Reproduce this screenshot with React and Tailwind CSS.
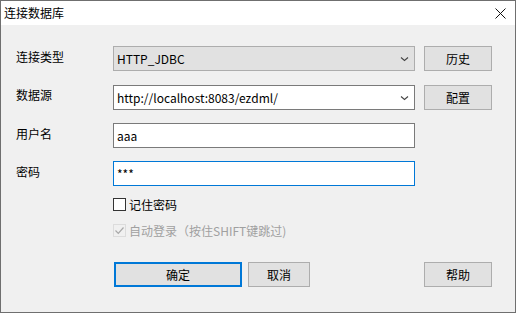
import React from "react";

const font = { fontFamily: '"Noto Sans CJK SC", "Noto Sans", sans-serif' };

function Chevron() {
  return (
    <svg width="9" height="6" viewBox="0 0 9 6" className="shrink-0">
      <path d="M1 1.5 L4.5 4.5 L8 1.5" fill="none" stroke="#444" strokeWidth="1.1" />
    </svg>
  );
}

function Btn({ children, primary }) {
  return (
    <div
      className={
        "flex h-[25px] items-center justify-center bg-[#e1e1e1] text-[12px] text-black " +
        (primary ? "border-2 border-[#0078d7]" : "border border-[#adadad]")
      }
    >
      {children}
    </div>
  );
}

export default function App() {
  return (
    <div className="h-[314px] w-[517px] bg-white" style={font}>
      <div className="flex h-[313px] w-[516px] flex-col border border-[#6f6f6f] bg-[#f0f0f0]">
        <div className="flex h-[24px] shrink-0 items-center justify-between bg-white pl-[3px] pr-[9px]">
          <span className="text-[12px] leading-none text-black">连接数据库</span>
          <svg width="11" height="11" viewBox="0 0 11 11">
            <path d="M0.5 0.5 L10.5 10.5 M10.5 0.5 L0.5 10.5" stroke="#111" strokeWidth="1" />
          </svg>
        </div>

        <div className="flex flex-col pl-[15px] pt-[21px] text-[12px] text-black">
          <div className="flex h-[25px] items-center">
            <span className="w-[97px] pb-[4px]">连接类型</span>
            <div className="flex h-[25px] w-[302px] items-center justify-between border border-[#adadad] bg-[#e1e1e1] pl-[3px] pr-[5px]">
              <span>HTTP_JDBC</span>
              <Chevron />
            </div>
            <div className="ml-[9px] w-[68px]">
              <Btn>历史</Btn>
            </div>
          </div>

          <div className="mt-[14px] flex h-[25px] items-center">
            <span className="w-[97px] pb-[5px]">数据源</span>
            <div className="flex h-[25px] w-[302px] items-center justify-between border border-[#7a7a7a] bg-white pl-[3px] pr-[5px]">
              <span>http://localhost:8083/ezdml/</span>
              <Chevron />
            </div>
            <div className="ml-[9px] w-[68px]">
              <Btn>配置</Btn>
            </div>
          </div>

          <div className="mt-[13px] flex h-[25px] items-center">
            <span className="w-[97px] pb-[4px]">用户名</span>
            <div className="flex h-[25px] w-[302px] items-center border border-[#7a7a7a] bg-white pl-[3px]">
              <span>aaa</span>
            </div>
          </div>

          <div className="mt-[13px] flex h-[25px] items-center">
            <span className="w-[97px] pb-[3px]">密码</span>
            <div className="flex h-[25px] w-[302px] items-center border border-[#0078d7] bg-white pl-[3px]">
              <span>***</span>
            </div>
          </div>

          <div className="ml-[97px] mt-[12px] flex h-[13px] items-center">
            <div className="h-[13px] w-[13px] border border-[#333333] bg-white" />
            <span className="ml-[3px]">记住密码</span>
          </div>

          <div className="ml-[97px] mt-[13px] flex h-[13px] items-center text-[#a0a0a0]">
            <div className="flex h-[13px] w-[13px] items-center justify-center border border-[#dcdcdc] bg-[#f0f0f0]">
              <svg width="11" height="11" viewBox="0 0 11 11">
                <path d="M1.5 5.5 L4.3 8.3 L9.5 2.5" fill="none" stroke="#a8a8a8" strokeWidth="1.2" />
              </svg>
            </div>
            <span className="ml-[3px]">自动登录（按住SHIFT键跳过)</span>
          </div>

          <div className="mt-[25px] flex h-[25px] items-center">
            <div className="ml-[98px] w-[128px]">
              <Btn primary>确定</Btn>
            </div>
            <div className="ml-[6px] w-[62px]">
              <Btn>取消</Btn>
            </div>
            <div className="ml-[114px] w-[68px]">
              <Btn>帮助</Btn>
            </div>
          </div>
        </div>
      </div>
    </div>
  );
}
